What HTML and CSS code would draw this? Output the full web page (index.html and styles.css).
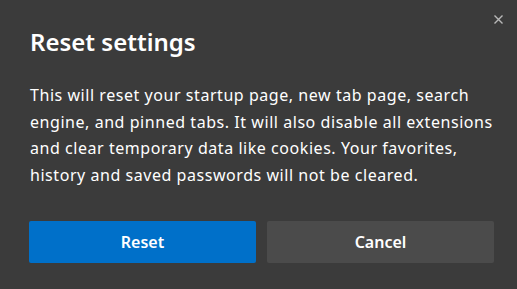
FILE: index.html
```html
<!DOCTYPE html>
<html lang="en">
<head>
    <meta charset="UTF-8">
    <title>Reset settings</title>
    <link rel="stylesheet" href="styles.css">
</head>
<body>
    <div class="dialog">
        <button class="close" aria-label="Close">
            <svg width="9" height="9" viewBox="0 0 9 9">
                <path d="M0.5 0.5 L8.5 8.5 M8.5 0.5 L0.5 8.5" stroke="#b8b8b8" stroke-width="1.4" />
            </svg>
        </button>
        <h1 class="title">Reset settings</h1>
        <p class="message">This will reset your startup page, new tab page, search engine, and pinned tabs. It will also disable all extensions and clear temporary data like cookies. Your favorites, history and saved passwords will not be cleared.</p>
        <div class="actions">
            <button class="btn btn-primary">Reset</button>
            <button class="btn btn-secondary">Cancel</button>
        </div>
    </div>
</body>
</html>
```
FILE: styles.css
```css
html,
body {
    margin: 0;
    height: 100%;
    background-color: #3b3b3b;
}

.dialog {
    position: relative;
    box-sizing: border-box;
    height: 100%;
    padding: 26px 14px 0 30px;
    font-family: "Noto Sans", "Open Sans", sans-serif;
    color: #ffffff;
}

.close {
    position: absolute;
    top: 11px;
    right: 10px;
    width: 17px;
    height: 17px;
    padding: 0;
    border: none;
    background: none;
    display: flex;
    align-items: center;
    justify-content: center;
}

.title {
    margin: 0;
    font-size: 24px;
    font-weight: 600;
    line-height: 32px;
}

.message {
    margin: 24px 0 0;
    font-size: 16px;
    letter-spacing: 0.55px;
    line-height: 26.7px;
}

.actions {
    display: flex;
    gap: 11px;
    margin-top: 32px;
    margin-left: -1px;
}

.btn {
    width: 227px;
    height: 42px;
    border: none;
    border-radius: 2px;
    font-family: inherit;
    font-size: 16px;
    font-weight: 600;
    color: #ffffff;
}

.btn-primary {
    background-color: #0070c9;
}

.btn-secondary {
    background-color: #4b4b4b;
}
```
